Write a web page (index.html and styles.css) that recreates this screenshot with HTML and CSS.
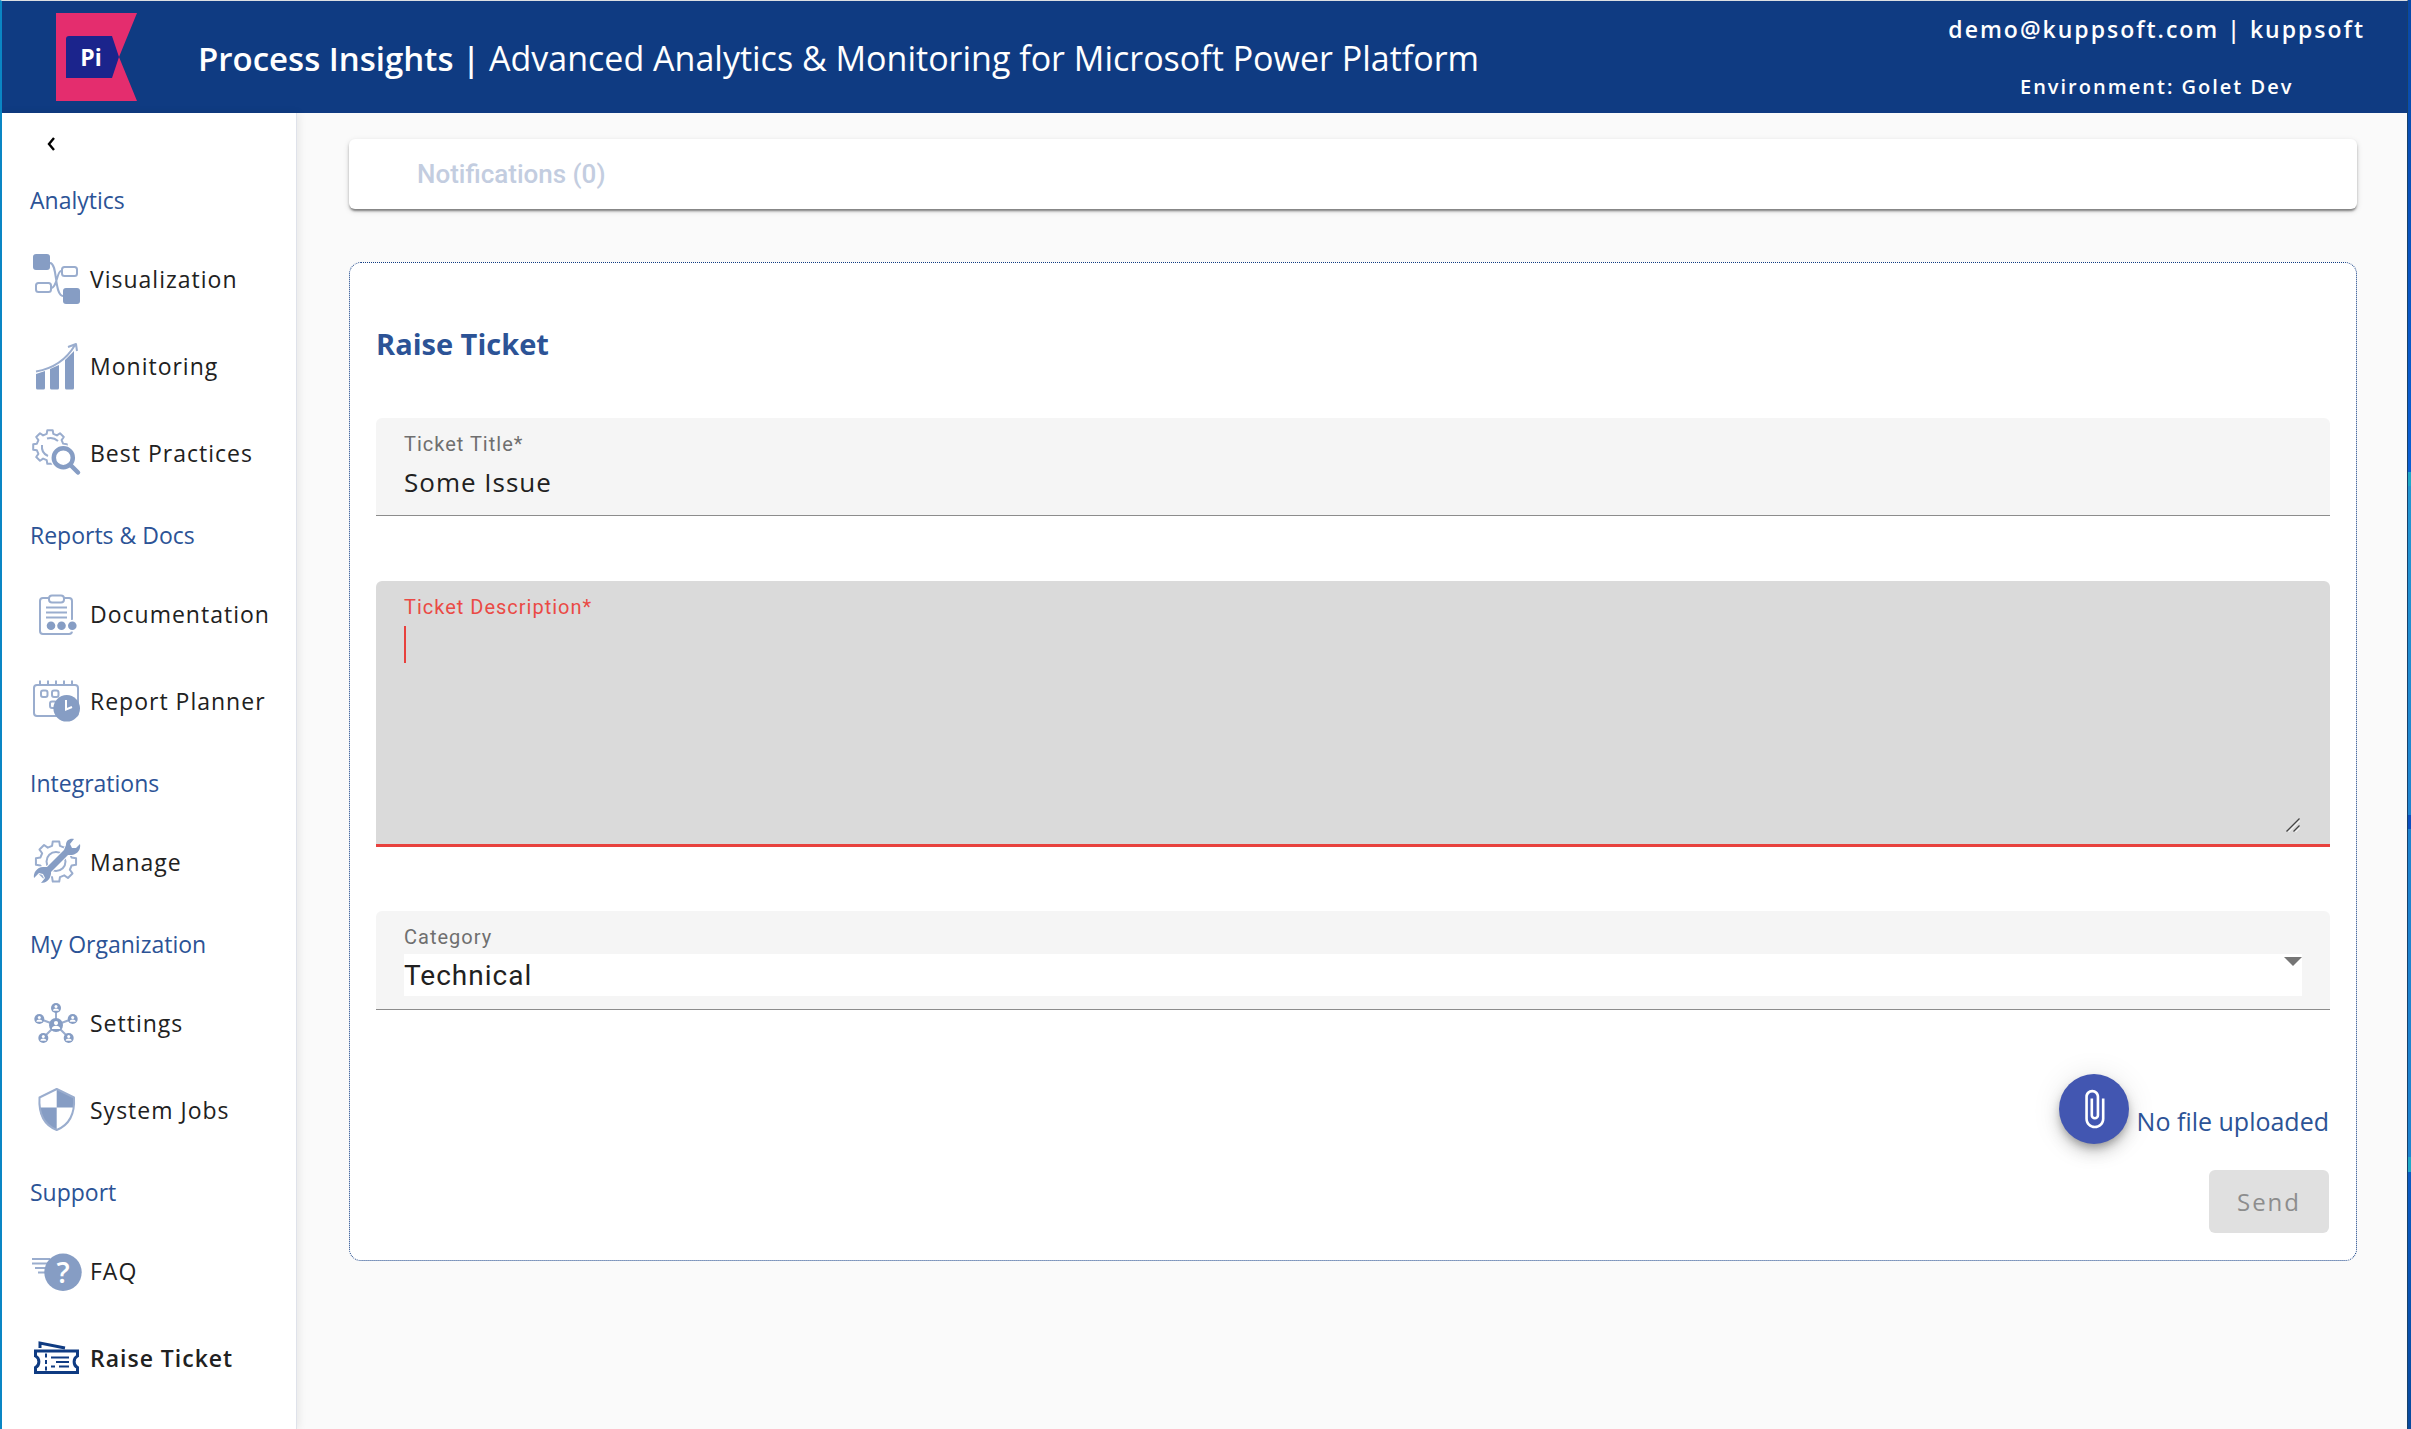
FILE: index.html
```
<!DOCTYPE html>
<html lang="en">
<head>
  <meta charset="UTF-8">
  <title>Process Insights - Raise Ticket</title>
  <meta name="viewport" content="width=device-width, initial-scale=1.0">

  <link rel="stylesheet" href="styles.css">
</head>

<body>

<!-- shared icon shapes -->
<svg class="defs" width="0" height="0" aria-hidden="true">
  <symbol id="gear" viewBox="-18 -18 36 36" overflow="visible">
    <path vector-effect="non-scaling-stroke" d="M13.1 -3.3L16.8 -2.7V2.7L13.1 3.3L11.6 6.9L13.8 10L10 13.8L6.9 11.6L3.3 13.1L2.7 16.8H-2.7L-3.3 13.1L-6.9 11.6L-10 13.8L-13.8 10L-11.6 6.9L-13.1 3.3L-16.8 2.7V-2.7L-13.1 -3.3L-11.6 -6.9L-13.8 -10L-10 -13.8L-6.9 -11.6L-3.3 -13.1L-2.7 -16.8H2.7L3.3 -13.1L6.9 -11.6L10 -13.8L13.8 -10L11.6 -6.9Z"/>
  </symbol>
  <symbol id="person" viewBox="-5 -5 10 10" overflow="visible">
    <circle r="5" fill="#869dc4"/>
    <circle cy="-1.4" r="1.5" fill="#fff"/>
    <path d="M-3 2.8C-3 -.2 3 -.2 3 2.8Z" fill="#fff"/>
  </symbol>
</svg>

<header class="topbar">
  <svg class="logo" viewBox="0 0 81 88" role="img" aria-label="Process Insights logo">
    <path d="M0 0H81L63 44L81 88H0Z" fill="#e42d6e"/>
    <path d="M13 23H56L63 44L56 65H10V26Q10 23 13 23Z" fill="#1b248c"/>
    <text x="35" y="53" text-anchor="middle">Pi</text>
  </svg>
  <h1 class="app-title"><b>Process Insights |</b> Advanced Analytics &amp; Monitoring for Microsoft Power Platform</h1>
  <div class="account">
    <div class="user">demo@kuppsoft.com | kuppsoft</div>
    <div class="env">Environment: Golet Dev</div>
  </div>
</header>

<div class="layout">

  <nav class="sidebar">
    <button class="collapse" type="button" aria-label="Collapse menu">
      <svg width="10" height="16" viewBox="0 0 10 16"><path d="M8 2L3 8L8 14" fill="none" stroke="#000" stroke-width="2.4"/></svg>
    </button>

    <h2>Analytics</h2>
    <a href="#visualization">
      <svg class="icon" viewBox="0 0 48 52">
        <path class="line" d="M18 10C26 10 22 43 31 43M19 35C25 35 25 18 29 18"/>
        <rect class="fill" x="1" y="1" width="17" height="16" rx="3"/>
        <rect class="fill" x="31" y="35" width="17" height="16" rx="3"/>
        <rect class="line" x="30" y="14" width="15" height="9" rx="2.5"/>
        <rect class="line" x="4" y="30" width="15" height="9" rx="2.5"/>
      </svg>
      Visualization
    </a>
    <a href="#monitoring">
      <svg class="icon" viewBox="0 0 48 52">
        <path class="fill" d="M4 34L13 31V48Q13 49.5 11.5 49.5H5.5Q4 49.5 4 48ZM18 29L27 25V48Q27 49.5 25.5 49.5H19.5Q18 49.5 18 48ZM33 20L42 11V48Q42 49.5 40.5 49.5H34.5Q33 49.5 33 48Z"/>
        <path class="line" d="M4 31.5Q30 27 43 5M36 7L44 4L45 11"/>
      </svg>
      Monitoring
    </a>
    <a href="#best-practices">
      <svg class="icon" viewBox="0 0 48 52">
        <use class="line" href="#gear" x="0" y="2" width="36" height="36"/>
        <path class="line" d="M15 11.5Q21 9.5 26 14M10 18Q9 26 16 29"/>
        <circle cx="31.3" cy="30.7" r="13" fill="#fff"/>
        <circle cx="31.3" cy="30.7" r="9.5" fill="#fff" stroke="#869dc4" stroke-width="4.5"/>
        <path d="M38.5 38L46 45.5" stroke="#869dc4" stroke-width="4.5" stroke-linecap="round"/>
      </svg>
      Best Practices
    </a>

    <h2>Reports &amp; Docs</h2>
    <a href="#documentation">
      <svg class="icon" viewBox="0 0 48 52">
        <rect class="line" x="8" y="10" width="32" height="36" rx="3"/>
        <rect class="clip" x="17" y="7.5" width="15" height="7" rx="3"/>
        <path class="line" d="M14 19.5H35M14 24.5H35M14 29.5H35"/>
        <circle cx="40.3" cy="37.7" r="6" fill="#fff"/>
        <circle class="fill" cx="19" cy="37.7" r="4.3"/>
        <circle class="fill" cx="29.5" cy="37.7" r="4.3"/>
        <circle class="fill" cx="40.3" cy="37.7" r="4.3"/>
      </svg>
      Documentation
    </a>
    <a href="#report-planner">
      <svg class="icon" viewBox="0 0 48 52">
        <rect class="line" x="2" y="10" width="44" height="31" rx="3"/>
        <path class="line" d="M8 5.5V10M16 5.5V10M24 5.5V10M32 5.5V10M40 5.5V10"/>
        <rect class="line" x="9" y="15.5" width="6.5" height="6.5" rx="2"/>
        <rect class="line" x="20" y="15.5" width="6.5" height="6.5" rx="2"/>
        <rect class="line" x="18" y="26.5" width="6.5" height="6.5" rx="2"/>
        <circle class="fill" cx="34.7" cy="33.3" r="13.3"/>
        <path d="M34 25V34.5L40 32" fill="none" stroke="#fff" stroke-width="2"/>
      </svg>
      Report Planner
    </a>

    <h2>Integrations</h2>
    <a href="#manage">
      <svg class="icon" viewBox="0 0 48 52">
        <use class="line" href="#gear" x="2.5" y="4" width="43" height="43"/>
        <circle class="line" cx="24" cy="25.5" r="9.5"/>
        <path d="M34 9C34 4 38 2 42 3L38 8L40 12L44 12L48 8C49 13 46 18 40 19L36 19L19 36V38C18 44 14 47 9 47L13 42L11 38L7 37L2 42C1 37 5 31 11 31H15L32 14Z" fill="#869dc4" stroke="#fff" stroke-width="2" paint-order="stroke"/>
      </svg>
      Manage
    </a>

    <h2>My Organization</h2>
    <a href="#settings">
      <svg class="icon" viewBox="0 0 48 52">
        <path class="line" d="M24 11V28M8 22L24 28L40 22M11 41L24 28L37 41"/>
        <use href="#person" x="17" y="21" width="14" height="14"/>
        <use href="#person" x="19" y="6" width="10" height="10"/>
        <use href="#person" x="2.3" y="17" width="10" height="10"/>
        <use href="#person" x="35.7" y="17" width="10" height="10"/>
        <use href="#person" x="6.3" y="36" width="10" height="10"/>
        <use href="#person" x="31.7" y="36" width="10" height="10"/>
      </svg>
      Settings
    </a>
    <a href="#system-jobs">
      <svg class="icon" viewBox="0 0 48 52">
        <path class="fill" d="M24.7 5L42 13.5V23.5H24.7ZM24.7 23.5V46C14 41 8 33 7.5 23.5Z"/>
        <path class="line" d="M24.7 5L42 13.5C43 30 37 41 24.7 46C12 41 6.5 30 7.5 13.5Z"/>
      </svg>
      System Jobs
    </a>

    <h2>Support</h2>
    <a href="#faq">
      <svg class="icon" viewBox="0 0 48 52">
        <path class="line" d="M0 14H18M0 18.5H16M3 23H14M6 27.5H13"/>
        <circle class="fill" cx="31" cy="27.3" r="18.7"/>
        <text class="mark" x="31" y="38" text-anchor="middle">?</text>
      </svg>
      FAQ
    </a>
    <a href="#raise-ticket" class="active" aria-current="page">
      <svg class="icon" viewBox="0 0 48 52">
        <g fill="none" stroke="#0f3b82">
          <path d="M8 16V11L33 16" stroke-width="3"/>
          <path d="M3.5 19H45.5V24C41 26 41 33.5 45.5 35.5V40.5H3.5V35.5C8 33.5 8 26 3.5 24Z" stroke-width="3"/>
          <path d="M14 21.5V40" stroke-width="2" stroke-dasharray="4 2.5"/>
          <path d="M19 25.5H37M24 30H37M27 34.5H37M19 34.5H23" stroke-width="2"/>
        </g>
      </svg>
      Raise Ticket
    </a>
  </nav>

  <main class="content">

    <div class="notifications">Notifications (0)</div>

    <form class="card">
      <h2>Raise Ticket</h2>

      <div class="field">
        <label for="title">Ticket Title*</label>
        <input id="title" type="text" value="Some Issue">
      </div>

      <div class="field invalid">
        <label for="description">Ticket Description*</label>
        <span class="caret"></span>
        <textarea id="description"></textarea>
        <svg class="grip" width="14" height="14" viewBox="0 0 14 14" fill="none">
          <path d="M2.5 14L14 2.5M9.5 14L14 9.5" stroke="#fff"/>
          <path d="M0.5 13.5L13.5 0.5M7.5 13.5L13.5 7.5" stroke="#444" stroke-width="1.3"/>
        </svg>
      </div>

      <div class="field select">
        <label for="category">Category</label>
        <select id="category">
          <option>Technical</option>
        </select>
        <svg class="arrow" width="18" height="9" viewBox="0 0 18 9"><path d="M0 0H18L9 9Z" fill="#757575"/></svg>
      </div>

      <div class="actions">
        <div class="upload">
          <button class="attach" type="button" aria-label="Attach file">
            <svg width="42" height="42" viewBox="0 0 24 24"><path fill="#fff" d="M16.5 6v11.5c0 2.21-1.79 4-4 4s-4-1.79-4-4V5a2.5 2.5 0 0 1 5 0v10.5c0 .55-.45 1-1 1s-1-.45-1-1V6H10v9.5a2.5 2.5 0 0 0 5 0V5c0-2.21-1.79-4-4-4S7 2.79 7 5v12.5c0 3.04 2.46 5.5 5.5 5.5s5.5-2.46 5.5-5.5V6h-1.5z"/></svg>
          </button>
          <span class="file-name">No file uploaded</span>
        </div>

        <button class="send" type="submit" disabled>Send</button>
      </div>
    </form>

  </main>
</div>

</body>
</html>
```
FILE: styles.css
```
* {
  box-sizing: border-box;
}

/* desktop showing past the right edge of the window */
html {
  background: linear-gradient(#0848a8, #0a60d4 33%, #1fa9c9 33%, #1fa9c9 34%, #2396d2 34%, #1f84d0 57%, #0a50c0 57%, #0a50c0 58%, #1f84d0 58%, #1f84d0 81%, #1fa9c9 81%, #1fa9c9 82%, #0a5cc4 82%, #084a9e);
}

body {
  font-family: "Open Sans", "Noto Sans", sans-serif;
  background: #fafafa;
  color: #212121;
  margin: 0 3px 0 0;
  min-height: 100vh;
  display: flex;
  flex-direction: column;
  border-top: 1px solid #dcdfe2;
  border-left: 2px solid #0a86c4;
  border-right: 1px solid #17406a;
}

.defs {
  position: absolute;
}

/* top bar */
.topbar {
  background: #0f3b82;
  color: #fff;
  height: 112px;
  padding: 0 42px 0 54px;
  display: flex;
  align-items: center;
}

.logo {
  width: 81px;
  height: 88px;
}

.logo text {
  fill: #fff;
  font-size: 23px;
  font-weight: 700;
}

.app-title {
  margin: 2px auto 0 61px;
  font-size: 34px;
  line-height: 44px;
  font-weight: 400;
}

.app-title b {
  font-size: 33px;
  font-weight: 600;
}

.account {
  text-align: center;
  font-weight: 600;
}

.user {
  font-size: 23px;
  line-height: 32px;
  letter-spacing: 2px;
}

.env {
  margin-top: 28px;
  font-size: 20px;
  line-height: 28px;
  letter-spacing: 2px;
}

.layout {
  flex: 1;
  display: flex;
}

/* sidebar */
.sidebar {
  width: 295px;
  flex-shrink: 0;
  background: #fff;
  border-right: 1px solid #dfe2ea;
  box-shadow: 2px 0 8px rgba(0, 0, 0, 0.08);
  padding-top: 13px;
}

.collapse {
  display: flex;
  align-items: center;
  height: 35px;
  margin-left: 36px;
  padding: 0 8px;
  border: none;
  background: none;
}

.sidebar h2 {
  margin: 0;
  height: 74px;
  padding: 4px 0 0 28px;
  display: flex;
  align-items: center;
  font-size: 23px;
  font-weight: 500;
  color: #2c5396;
}

.sidebar a {
  height: 87px;
  padding-left: 30px;
  display: flex;
  align-items: center;
  gap: 10px;
  font-size: 23px;
  font-weight: 500;
  letter-spacing: 1px;
  color: #212121;
  text-decoration: none;
}

.sidebar a.active {
  font-weight: 600;
}

.icon {
  width: 48px;
  height: 52px;
  flex-shrink: 0;
  overflow: visible;
}

.icon .fill {
  fill: #869dc4;
}

.icon .line,
.icon .clip {
  fill: none;
  stroke: #9aadce;
  stroke-width: 2;
  stroke-linejoin: round;
}

.icon .clip {
  fill: #fff;
}

.icon .mark {
  fill: #fff;
  font-size: 29px;
  font-weight: 600;
  letter-spacing: 0;
}

/* main content */
.content {
  flex: 1;
  padding: 26px 50px 26px 52px;
}

.notifications {
  height: 70px;
  padding-left: 68px;
  display: flex;
  align-items: center;
  background: #fff;
  border-radius: 6px;
  box-shadow: 0 3px 2px -1px rgba(0, 0, 0, 0.3), 0 2px 3px rgba(0, 0, 0, 0.2), 0 2px 6px rgba(0, 0, 0, 0.12);
  font-family: Roboto, sans-serif;
  font-size: 26px;
  font-weight: 500;
  color: #c3cde0;
}

.card {
  margin-top: 53px;
  padding: 56px 26px 27px;
  display: flex;
  flex-direction: column;
  background: #fff;
  border: 1px dotted #0f3b82;
  border-radius: 12px;
}

.card h2 {
  margin: 0 0 49px;
  font-size: 29px;
  line-height: 50px;
  font-weight: 700;
  color: #2c5396;
}

.field {
  position: relative;
  margin-bottom: 65px;
  padding: 12px 28px 13px;
  display: flex;
  flex-direction: column;
  background: #f5f5f5;
  border-bottom: 1px solid #8c8c8c;
  border-radius: 6px 6px 0 0;
}

.field label {
  font-family: Roboto, sans-serif;
  font-size: 20px;
  line-height: 28px;
  letter-spacing: 1px;
  color: #6f6f6f;
}

.field input,
.field textarea,
.field select {
  width: 100%;
  margin: 4px 0 0;
  padding: 0;
  border: none;
  outline: none;
  background: none;
  font-family: inherit;
  font-size: 26px;
  letter-spacing: 1px;
  color: #212121;
}

.field input {
  height: 40px;
}

.field.invalid {
  margin-bottom: 64px;
  background: #dadada;
  border-bottom: 3px solid #e8413d;
}

.field.invalid label {
  color: #ea4a45;
}

.field textarea {
  height: 206px;
  resize: none;
}

.caret {
  position: absolute;
  top: 45px;
  left: 28px;
  width: 2px;
  height: 37px;
  background: #e8413d;
}

.grip {
  position: absolute;
  right: 30px;
  bottom: 12px;
}

.field.select {
  margin-bottom: 64px;
}

.field select {
  height: 42px;
  margin-top: 3px;
  appearance: none;
  background: #fff;
  font-family: Roboto, sans-serif;
  font-size: 28px;
}

.arrow {
  position: absolute;
  top: 46px;
  right: 28px;
}

.actions {
  display: flex;
  flex-direction: column;
  align-items: flex-end;
  gap: 26px;
  padding-right: 1px;
}

.upload {
  display: flex;
  align-items: center;
  gap: 8px;
}

.attach {
  width: 70px;
  height: 70px;
  padding: 0;
  display: flex;
  align-items: center;
  justify-content: center;
  border: none;
  border-radius: 50%;
  background: #4256b1;
  box-shadow: 0 5px 9px -2px rgba(0, 0, 0, 0.3), 0 9px 16px rgba(0, 0, 0, 0.14), 0 2px 30px rgba(0, 0, 0, 0.1);
}

.file-name {
  padding-top: 24px;
  font-size: 25px;
  line-height: 32px;
  color: #2c5396;
}

.send {
  width: 120px;
  height: 63px;
  border: none;
  border-radius: 6px;
  background: #e0e0e0;
  font-family: inherit;
  font-size: 24px;
  font-weight: 500;
  letter-spacing: 2px;
  color: #8d8d8d;
}
```
